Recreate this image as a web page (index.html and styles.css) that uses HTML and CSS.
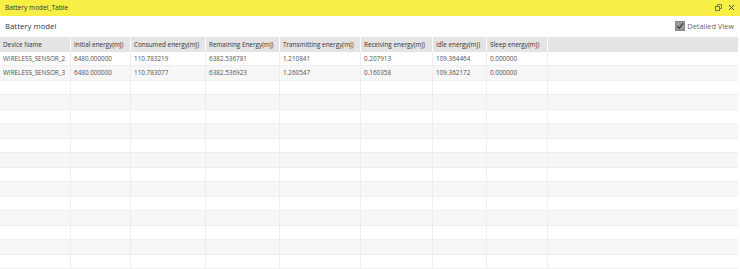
FILE: index.html
```html
<!DOCTYPE html>
<html>
<head>
<meta charset="utf-8">
<link rel="stylesheet" href="styles.css">
</head>
<body>
<div class="window">
  <div class="titlebar">
    <span class="title">Battery model_Table</span>
    <div class="win-icons">
      <svg class="ico" width="9" height="9" viewBox="0 0 9 9"><rect x="1.5" y="3.5" width="4" height="4" fill="none" stroke="#666" stroke-width="0.9"/><path d="M3.5 3.5V1.5H7.5V5.5H5.5" fill="none" stroke="#666" stroke-width="0.9"/></svg>
      <svg class="ico" width="9" height="9" viewBox="0 0 9 9"><path d="M2 2L7 7M7 2L2 7" stroke="#444" stroke-width="1"/></svg>
    </div>
  </div>
  <div class="toolbar">
    <span class="heading">Battery model</span>
    <label class="detail">
      <svg class="cb" width="10" height="10" viewBox="0 0 10 10"><rect x="0.5" y="0.5" width="9" height="9" fill="#9a9a9a" stroke="#888"/><path d="M2.2 5.2L4.2 7.4L8 2.4" fill="none" stroke="#3a3a3a" stroke-width="1.2"/></svg>
      <span>Detailed View</span>
    </label>
  </div>
  <div class="table">
    <div class="row head">
      <div class="c">Device Name</div><div class="c">Initial energy(mJ)</div><div class="c">Consumed energy(mJ)</div><div class="c">Remaining Energy(mJ)</div><div class="c">Transmitting energy(mJ)</div><div class="c">Receiving energy(mJ)</div><div class="c">Idle energy(mJ)</div><div class="c">Sleep energy(mJ)</div><div class="c"></div>
    </div>
    <div class="row">
      <div class="c">WIRELESS_SENSOR_2</div><div class="c">6480.000000</div><div class="c">110.783219</div><div class="c">6382.536781</div><div class="c">1.210841</div><div class="c">0.207913</div><div class="c">109.364464</div><div class="c">0.000000</div><div class="c"></div>
    </div>
    <div class="row">
      <div class="c">WIRELESS_SENSOR_3</div><div class="c">6480.000000</div><div class="c">110.783077</div><div class="c">6382.536923</div><div class="c">1.260547</div><div class="c">0.160358</div><div class="c">109.362172</div><div class="c">0.000000</div><div class="c"></div>
    </div>
    <div class="row"><div class="c"></div><div class="c"></div><div class="c"></div><div class="c"></div><div class="c"></div><div class="c"></div><div class="c"></div><div class="c"></div><div class="c"></div></div>
    <div class="row"><div class="c"></div><div class="c"></div><div class="c"></div><div class="c"></div><div class="c"></div><div class="c"></div><div class="c"></div><div class="c"></div><div class="c"></div></div>
    <div class="row"><div class="c"></div><div class="c"></div><div class="c"></div><div class="c"></div><div class="c"></div><div class="c"></div><div class="c"></div><div class="c"></div><div class="c"></div></div>
    <div class="row"><div class="c"></div><div class="c"></div><div class="c"></div><div class="c"></div><div class="c"></div><div class="c"></div><div class="c"></div><div class="c"></div><div class="c"></div></div>
    <div class="row"><div class="c"></div><div class="c"></div><div class="c"></div><div class="c"></div><div class="c"></div><div class="c"></div><div class="c"></div><div class="c"></div><div class="c"></div></div>
    <div class="row"><div class="c"></div><div class="c"></div><div class="c"></div><div class="c"></div><div class="c"></div><div class="c"></div><div class="c"></div><div class="c"></div><div class="c"></div></div>
    <div class="row"><div class="c"></div><div class="c"></div><div class="c"></div><div class="c"></div><div class="c"></div><div class="c"></div><div class="c"></div><div class="c"></div><div class="c"></div></div>
    <div class="row"><div class="c"></div><div class="c"></div><div class="c"></div><div class="c"></div><div class="c"></div><div class="c"></div><div class="c"></div><div class="c"></div><div class="c"></div></div>
    <div class="row"><div class="c"></div><div class="c"></div><div class="c"></div><div class="c"></div><div class="c"></div><div class="c"></div><div class="c"></div><div class="c"></div><div class="c"></div></div>
    <div class="row"><div class="c"></div><div class="c"></div><div class="c"></div><div class="c"></div><div class="c"></div><div class="c"></div><div class="c"></div><div class="c"></div><div class="c"></div></div>
    <div class="row"><div class="c"></div><div class="c"></div><div class="c"></div><div class="c"></div><div class="c"></div><div class="c"></div><div class="c"></div><div class="c"></div><div class="c"></div></div>
    <div class="row"><div class="c"></div><div class="c"></div><div class="c"></div><div class="c"></div><div class="c"></div><div class="c"></div><div class="c"></div><div class="c"></div><div class="c"></div></div>
    <div class="row"><div class="c"></div><div class="c"></div><div class="c"></div><div class="c"></div><div class="c"></div><div class="c"></div><div class="c"></div><div class="c"></div><div class="c"></div></div>
  </div>
</div>
</body>
</html>
```
FILE: styles.css
```css
html, body {
  margin: 0;
  padding: 0;
  background: #ffffff;
  overflow: hidden;
}
body {
  font-family: "Open Sans", "Noto Sans", sans-serif;
  width: 740px;
  height: 269px;
}
.window {
  display: flex;
  flex-direction: column;
  height: 269px;
}
.titlebar {
  height: 16px;
  background: #f7ef45;
  display: flex;
  align-items: center;
  justify-content: space-between;
  padding: 0 4px 0 5px;
  box-sizing: border-box;
}
.title {
  font-size: 6.6px;
  color: #333333;
}
.win-icons {
  display: flex;
  gap: 4px;
  align-items: center;
}
.ico {
  display: block;
}
.toolbar {
  height: 22px;
  display: flex;
  align-items: center;
  justify-content: space-between;
  padding: 0 6px 0 5px;
  box-sizing: border-box;
}
.heading {
  font-size: 7.8px;
  color: #1f3552;
}
.detail {
  display: flex;
  align-items: center;
  gap: 2px;
  font-size: 7.4px;
  color: #666;
}
.cb {
  display: block;
}
.table {
  width: 738px;
  display: flex;
  flex-direction: column;
}
.row {
  display: grid;
  grid-template-columns: 71px 60px 75px 74px 81px 72px 54px 61px 1fr;
  height: 14.5px;
  border-bottom: 1px solid #efefef;
  box-sizing: border-box;
}
.row:nth-child(odd) {
  background: #f7f7f7;
}
.row.head {
  background: #e4e4e4;
  border-bottom: none;
}
.c {
  font-size: 6.35px;
  color: #505050;
  padding-left: 3px;
  display: flex;
  align-items: center;
  white-space: nowrap;
  overflow: hidden;
  border-right: 1px solid #eeeeee;
  box-sizing: border-box;
}
.head .c {
  color: #333333;
  border-right: 1px solid #ffffff;
}
.c:last-child {
  border-right: none;
}
```
